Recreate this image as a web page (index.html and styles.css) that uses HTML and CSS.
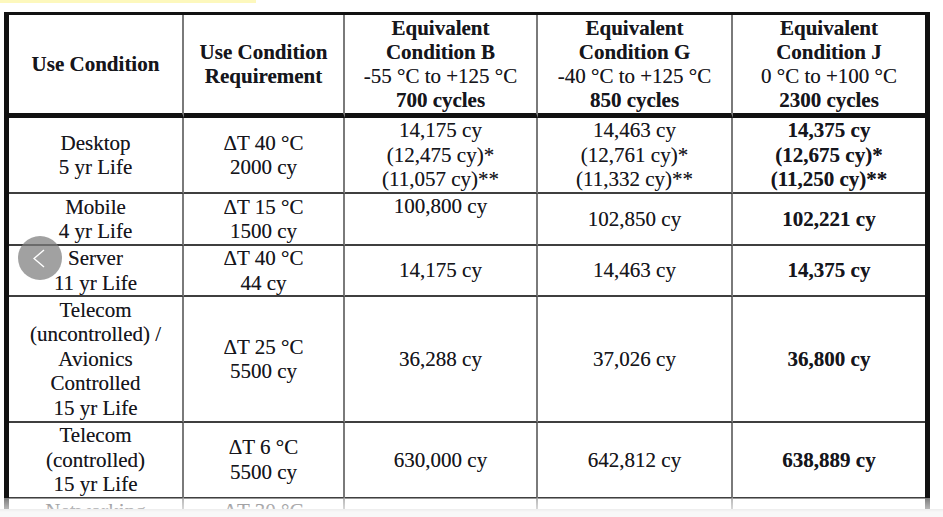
FILE: index.html
```html
<!DOCTYPE html>
<html lang="en">

<head>
    <meta charset="UTF-8">
    <title>Use Condition Table</title>
    <link rel="stylesheet" href="styles.css">
</head>

<body>

    <div class="viewer">
        <div class="mark"></div>

        <table class="spec">
            <colgroup>
                <col class="c1">
                <col class="c2">
                <col class="c3">
                <col class="c4">
                <col class="c5">
            </colgroup>
            <tr class="head">
                <th>Use Condition</th>
                <th>Use Condition<br>Requirement</th>
                <th>Equivalent<br>Condition B<br><span class="temp">-55 °C to +125 °C</span><br>700 cycles</th>
                <th>Equivalent<br>Condition G<br><span class="temp">-40 °C to +125 °C</span><br>850 cycles</th>
                <th>Equivalent<br>Condition J<br><span class="temp">0 °C to +100 °C</span><br>2300 cycles</th>
            </tr>
            <tr class="desk">
                <td>Desktop<br>5 yr Life</td>
                <td>ΔT 40 °C<br>2000 cy</td>
                <td>14,175 cy<br>(12,475 cy)*<br>(11,057 cy)**</td>
                <td>14,463 cy<br>(12,761 cy)*<br>(11,332 cy)**</td>
                <td class="strong">14,375 cy<br>(12,675 cy)*<br>(11,250 cy)**</td>
            </tr>
            <tr class="mob">
                <td>Mobile<br>4 yr Life</td>
                <td>ΔT 15 °C<br>1500 cy</td>
                <td class="top">100,800 cy</td>
                <td>102,850 cy</td>
                <td class="strong">102,221 cy</td>
            </tr>
            <tr class="srv">
                <td>Server<br>11 yr Life</td>
                <td>ΔT 40 °C<br>44 cy</td>
                <td>14,175 cy</td>
                <td>14,463 cy</td>
                <td class="strong">14,375 cy</td>
            </tr>
            <tr class="tel">
                <td>Telecom<br>(uncontrolled) /<br>Avionics<br>Controlled<br>15 yr Life</td>
                <td>ΔT 25 °C<br>5500 cy</td>
                <td>36,288 cy</td>
                <td>37,026 cy</td>
                <td class="strong">36,800 cy</td>
            </tr>
            <tr class="telc">
                <td>Telecom<br>(controlled)<br>15 yr Life</td>
                <td>ΔT 6 °C<br>5500 cy</td>
                <td>630,000 cy</td>
                <td>642,812 cy</td>
                <td class="strong">638,889 cy</td>
            </tr>
            <tr class="net">
                <td class="top">Networking</td>
                <td class="top">ΔT 30 °C</td>
                <td></td>
                <td></td>
                <td></td>
            </tr>
        </table>

        <div class="fade"></div>

        <button class="nav" aria-label="Previous">
            <svg width="12" height="19" viewBox="0 0 12 19">
                <polyline points="11,1 1,9.5 11,18" fill="none" stroke="#fff" stroke-width="1.4" />
            </svg>
        </button>
    </div>

</body>

</html>
```

FILE: styles.css
```css
body {
    margin: 0;
    background: linear-gradient(#ececec, #f8f8f8 3px, #fafafa);
    font-family: "Liberation Serif", "Times New Roman", serif;
    color: #16161c;
}

.viewer {
    position: relative;
    height: 509px;
    overflow: hidden;
    background: #fff;
}

.mark {
    width: 256px;
    height: 3px;
    background: #fdf8bd;
}

.spec {
    margin: 9px 0 0 4px;
    width: 916px;
    table-layout: fixed;
    border-collapse: separate;
    border-spacing: 0;
    border-top: 3px solid #111;
    border-left: 5px solid #111;
    border-right: 5px solid #111;
    font-size: 21px;
    line-height: 24.5px;
    text-shadow: 0 0 0.6px rgba(0, 0, 0, 0.45);
}

.c1 {
    width: 175px;
}

.c2 {
    width: 161px;
}

.c3 {
    width: 193px;
}

.c4 {
    width: 195px;
}

.c5 {
    width: 192px;
}

th,
td {
    padding: 0 2px;
    text-align: center;
    vertical-align: middle;
    border-right: 2px solid #7a7a7a;
    border-bottom: 2px solid #3f3f3f;
    white-space: nowrap;
}

th:last-child,
td:last-child {
    border-right: none;
}

th {
    font-weight: bold;
    line-height: 24px;
    border-bottom: 5px solid #111;
}

.temp {
    font-weight: normal;
}

.strong {
    font-weight: bold;
}

.top {
    vertical-align: top;
}

.head {
    height: 103px;
}

.desk {
    height: 76px;
}

.mob {
    height: 52px;
}

.srv {
    height: 51px;
}

.tel {
    height: 126px;
}

.telc {
    height: 75px;
}

.net {
    height: 75px;
}

.fade {
    position: absolute;
    left: 0;
    right: 0;
    bottom: 0;
    height: 11px;
    background: linear-gradient(rgba(255, 255, 255, 0.45), rgba(255, 255, 255, 0.7));
}

.nav {
    position: absolute;
    left: 18px;
    top: 236px;
    width: 44px;
    height: 44px;
    padding: 0 3px 0 0;
    border: none;
    border-radius: 50%;
    background: rgba(125, 125, 125, 0.72);
    display: flex;
    align-items: center;
    justify-content: center;
}
```
